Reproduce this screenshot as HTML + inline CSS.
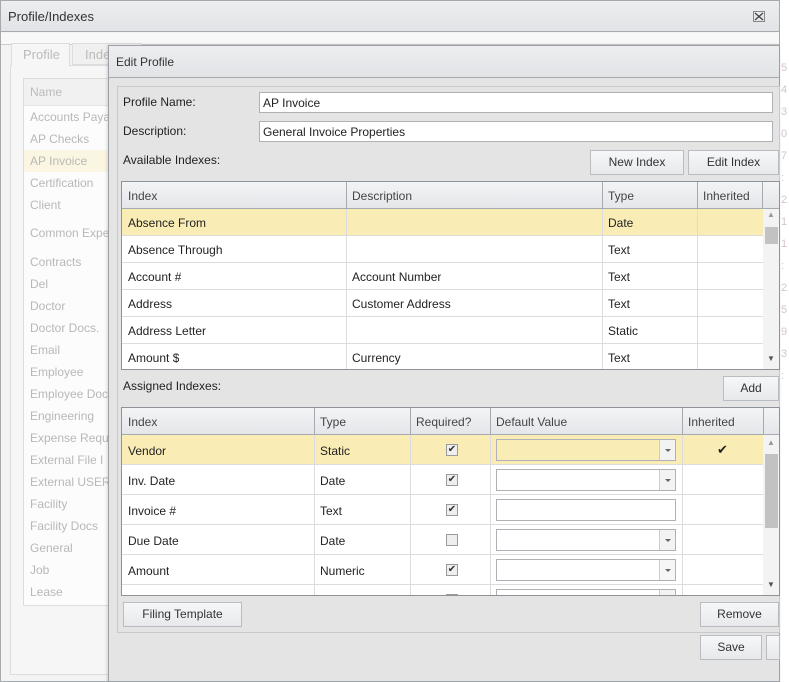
<!DOCTYPE html>
<html><head><meta charset="utf-8"><style>
*{box-sizing:border-box;margin:0;padding:0}
body{width:789px;height:682px;overflow:hidden;background:#f7f7f7;font-family:"Liberation Sans","DejaVu Sans",sans-serif;font-size:12px;color:#222;position:relative}
.a{position:absolute}
.t{position:absolute;white-space:nowrap}
.btn{position:absolute;border:1px solid #b9bcc0;background:linear-gradient(#f6f7f8,#e8e9eb);text-align:center;color:#333;font-size:12px}
.inp{position:absolute;background:#fff;border:1px solid #aeb2b7}
.g{position:absolute;border:1px solid #8e9399;background:#fff;overflow:hidden}
.hd{position:absolute;left:0;top:0;right:0;background:linear-gradient(#f3f4f6,#e4e6e9);border-bottom:1px solid #a6aab0}
.cell{position:absolute;white-space:nowrap;overflow:hidden;padding-left:6px;font-size:12px}
.row{position:absolute;left:0;border-bottom:1px solid #dcdcdc}
.vl{position:absolute;top:0;bottom:0;width:1px;background:#dcdcdc}
.hvl{position:absolute;top:0;width:1px;background:#a6aab0}
.cb{position:absolute;width:12px;height:12px;border:1px solid #9a9a9a;background:#eee;font-size:10px;line-height:10px;text-align:center;color:#333}
.dd{position:absolute;height:22px;border:1px solid #aeb2b7;background:#fff}
.dd i{position:absolute;right:0;top:0;width:16px;height:20px;border-left:1px solid #ccc;background:#f3f3f3}
.dd i:after{content:"";position:absolute;left:5px;top:9px;border-left:3px solid transparent;border-right:3px solid transparent;border-top:3px solid #666}
</style></head><body>
<!-- right background strip -->
<div class="a" style="left:780px;top:0;width:9px;height:682px;background:#fff"></div>
<div class="t" style="left:781px;top:57px;color:#d4c4cf;line-height:22px;font-size:11px">5<br>4<br>3<br>0<br>7<br>:<br>2<br>1<br>1<br>:<br>2<br>5<br>9<br>3<br>:</div>
<!-- outer window -->
<div class="a" style="left:0;top:0;width:780px;height:682px;border:1px solid #a6a9ad;background:#f3f3f3"></div>
<div class="a" style="left:0;top:0;width:780px;height:32px;background:linear-gradient(#eceef0,#e1e3e6);border:1px solid #a6a9ad"></div>
<div class="t" style="left:8px;top:9px;font-size:13px;color:#333">Profile/Indexes</div>
<svg class="a" style="left:753px;top:11px" width="12" height="11" viewBox="0 0 12 11"><rect x="0.5" y="0.5" width="11" height="10" fill="none" stroke="#888"/><path d="M2 2L10 9M10 2L2 9" stroke="#444" stroke-width="1.3"/></svg>
<div class="a" style="left:1px;top:33px;width:778px;height:12px;background:#f8f8f8;border-bottom:1px solid #ccc"></div>
<div class="a" style="left:10px;top:65px;width:110px;height:610px;border:1px solid #ddd;background:#f6f6f6"></div>
<div class="a" style="left:11px;top:43px;width:59px;height:23px;border:1px solid #ddd;border-bottom:none;background:#f6f6f6"></div>
<div class="t" style="left:23px;top:47px;color:#bbb;font-size:13px">Profile</div>
<div class="a" style="left:72px;top:43px;width:70px;height:22px;border:1px solid #ddd;background:#f0f0f0"></div>
<div class="t" style="left:85px;top:47px;color:#bbb;font-size:13px">Inde</div>
<div class="a" style="left:23px;top:78px;width:90px;height:528px;border:1px solid #ddd;background:#fcfcfc"></div>
<div class="a" style="left:24px;top:79px;width:90px;height:27px;background:#f1f1f1;border-bottom:1px solid #e4e4e4"></div>
<div class="t" style="left:30px;top:85px;color:#bbb;font-size:12px">Name</div>
<div class="a" style="left:24px;top:150px;width:90px;height:22px;background:#fbf6e2"></div>
<div class="t" style="left:30px;top:106px;color:#b8b8b8;line-height:22px">Accounts Paya<br>AP Checks<br>AP Invoice<br>Certification<br>Client</div>
<div class="t" style="left:30px;top:222px;color:#b8b8b8;line-height:22px">Common Expe</div>
<div class="t" style="left:30px;top:251px;color:#b8b8b8;line-height:22px">Contracts<br>Del<br>Doctor<br>Doctor Docs.<br>Email<br>Employee<br>Employee Doc<br>Engineering<br>Expense Requ<br>External File I<br>External USER<br>Facility<br>Facility Docs<br>General<br>Job<br>Lease</div>
<!-- dialog -->
<div class="a" style="left:108px;top:45px;width:672px;height:637px;border:1px solid #9da1a6;background:#e4e4e4;box-shadow:-1px 0 3px rgba(0,0,0,.15)"></div>
<div class="a" style="left:109px;top:46px;width:670px;height:32px;background:linear-gradient(#eceef0,#e1e3e6);border-bottom:1px solid #a6a9ad"></div>
<div class="t" style="left:116px;top:55px;font-size:12px;color:#333">Edit Profile</div>
<div class="a" style="left:117px;top:86px;width:663px;height:547px;border:1px solid #c9c9c9"></div>
<div class="t" style="left:123px;top:95px">Profile Name:</div>
<div class="inp" style="left:259px;top:92px;width:514px;height:21px"></div>
<div class="t" style="left:263px;top:96px">AP Invoice</div>
<div class="t" style="left:123px;top:124px">Description:</div>
<div class="inp" style="left:259px;top:121px;width:514px;height:21px"></div>
<div class="t" style="left:263px;top:125px">General Invoice Properties</div>
<div class="t" style="left:123px;top:153px">Available Indexes:</div>
<div class="btn" style="left:590px;top:150px;width:94px;height:25px;line-height:23px">New Index</div>
<div class="btn" style="left:688px;top:150px;width:91px;height:25px;line-height:23px">Edit Index</div>
<!-- grid 1 -->
<div class="g" style="left:121px;top:181px;width:659px;height:189px">
 <div class="hd" style="height:27px"></div>
 <div class="hvl" style="left:224px;height:27px"></div><div class="hvl" style="left:480px;height:27px"></div><div class="hvl" style="left:575px;height:27px"></div><div class="hvl" style="left:640px;height:27px"></div>
 <div class="cell" style="left:0;top:7px;color:#444">Index</div>
 <div class="cell" style="left:224px;top:7px;color:#444">Description</div>
 <div class="cell" style="left:480px;top:7px;color:#444">Type</div>
 <div class="cell" style="left:575px;top:7px;color:#444">Inherited</div>
 <div class="row" style="top:27px;width:641px;height:27px;background:#f9ecb5"></div>
 <div class="row" style="top:54px;width:641px;height:27px"></div>
 <div class="row" style="top:81px;width:641px;height:27px"></div>
 <div class="row" style="top:108px;width:641px;height:27px"></div>
 <div class="row" style="top:135px;width:641px;height:27px"></div>
 <div class="row" style="top:162px;width:641px;height:27px"></div>
 <div class="vl" style="left:224px;top:27px"></div><div class="vl" style="left:480px;top:27px"></div><div class="vl" style="left:575px;top:27px"></div>
 <div class="a" style="left:641px;top:27px;width:17px;height:162px;background:#f3f3f3"></div>
 <div class="a" style="left:643px;top:45px;width:13px;height:17px;background:#c2c2c2"></div>
 <div class="t" style="left:645px;top:28px;font-size:8px;color:#999">▲</div>
 <div class="t" style="left:645px;top:172px;font-size:8px;color:#555">▼</div>
 <div class="cell" style="left:0;top:34px">Absence From</div><div class="cell" style="left:480px;top:34px">Date</div>
 <div class="cell" style="left:0;top:61px">Absence Through</div><div class="cell" style="left:480px;top:61px">Text</div>
 <div class="cell" style="left:0;top:88px">Account #</div><div class="cell" style="left:224px;top:88px">Account Number</div><div class="cell" style="left:480px;top:88px">Text</div>
 <div class="cell" style="left:0;top:115px">Address</div><div class="cell" style="left:224px;top:115px">Customer Address</div><div class="cell" style="left:480px;top:115px">Text</div>
 <div class="cell" style="left:0;top:142px">Address Letter</div><div class="cell" style="left:480px;top:142px">Static</div>
 <div class="cell" style="left:0;top:169px">Amount $</div><div class="cell" style="left:224px;top:169px">Currency</div><div class="cell" style="left:480px;top:169px">Text</div>
</div>
<div class="t" style="left:123px;top:379px">Assigned Indexes:</div>
<div class="btn" style="left:723px;top:376px;width:56px;height:25px;line-height:23px">Add</div>
<!-- grid 2 -->
<div class="g" style="left:121px;top:407px;width:659px;height:189px">
 <div class="hd" style="height:27px"></div>
 <div class="hvl" style="left:192px;height:27px"></div><div class="hvl" style="left:288px;height:27px"></div><div class="hvl" style="left:368px;height:27px"></div><div class="hvl" style="left:560px;height:27px"></div><div class="hvl" style="left:641px;height:27px"></div>
 <div class="cell" style="left:0;top:7px;color:#444">Index</div>
 <div class="cell" style="left:192px;top:7px;color:#444">Type</div>
 <div class="cell" style="left:288px;top:7px;color:#444">Required?</div>
 <div class="cell" style="left:368px;top:7px;color:#444">Default Value</div>
 <div class="cell" style="left:560px;top:7px;color:#444">Inherited</div>
 <div class="row" style="top:27px;width:641px;height:30px;background:#f9ecb5"></div>
 <div class="row" style="top:57px;width:641px;height:30px"></div>
 <div class="row" style="top:87px;width:641px;height:30px"></div>
 <div class="row" style="top:117px;width:641px;height:30px"></div>
 <div class="row" style="top:147px;width:641px;height:30px"></div>
 <div class="vl" style="left:192px;top:27px"></div><div class="vl" style="left:288px;top:27px"></div><div class="vl" style="left:368px;top:27px"></div><div class="vl" style="left:560px;top:27px"></div>
 <div class="a" style="left:641px;top:27px;width:17px;height:162px;background:#f3f3f3"></div>
 <div class="a" style="left:643px;top:46px;width:13px;height:74px;background:#c2c2c2"></div>
 <div class="t" style="left:645px;top:30px;font-size:8px;color:#999">▲</div>
 <div class="t" style="left:645px;top:172px;font-size:8px;color:#555">▼</div>
 <div class="cell" style="left:0;top:36px">Vendor</div><div class="cell" style="left:192px;top:36px">Static</div>
 <div class="cell" style="left:0;top:66px">Inv. Date</div><div class="cell" style="left:192px;top:66px">Date</div>
 <div class="cell" style="left:0;top:96px">Invoice #</div><div class="cell" style="left:192px;top:96px">Text</div>
 <div class="cell" style="left:0;top:126px">Due Date</div><div class="cell" style="left:192px;top:126px">Date</div>
 <div class="cell" style="left:0;top:156px">Amount</div><div class="cell" style="left:192px;top:156px">Numeric</div>
 <div class="cb" style="left:324px;top:36px">✔</div>
 <div class="cb" style="left:324px;top:66px">✔</div>
 <div class="cb" style="left:324px;top:96px">✔</div>
 <div class="cb" style="left:324px;top:126px"></div>
 <div class="cb" style="left:324px;top:156px">✔</div>
 <div class="cb" style="left:324px;top:186px"></div>
 <div class="dd" style="left:374px;top:31px;width:180px;background:#f9ecb5"><i></i></div>
 <div class="dd" style="left:374px;top:61px;width:180px"><i></i></div>
 <div class="dd" style="left:374px;top:91px;width:180px"></div>
 <div class="dd" style="left:374px;top:121px;width:180px"><i></i></div>
 <div class="dd" style="left:374px;top:151px;width:180px"><i style="background:#f6f6f6"></i></div>
 <div class="dd" style="left:374px;top:181px;width:180px"><i></i></div>
 <div class="t" style="left:595px;top:34px;font-size:13px">✔</div>
</div>
<div class="btn" style="left:123px;top:602px;width:119px;height:25px;line-height:23px">Filing Template</div>
<div class="btn" style="left:700px;top:602px;width:79px;height:25px;line-height:23px">Remove</div>
<div class="btn" style="left:700px;top:635px;width:62px;height:25px;line-height:23px">Save</div>
<div class="btn" style="left:766px;top:635px;width:14px;height:25px"></div>
</body></html>
